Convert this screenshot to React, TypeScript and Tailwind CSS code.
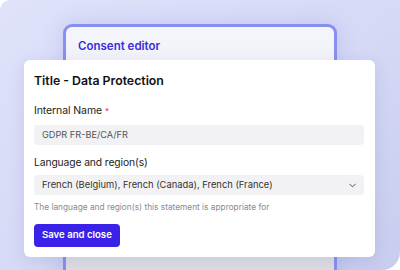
import { ChevronDown } from 'lucide-react'

// Consent editor preview card

export default function App() {
  return (
    <div
      className="relative w-[400px] h-[270px] overflow-hidden rounded-br-[18px] rounded-tl-[10px] bg-gradient-to-br from-[#dfe2fa] via-[#d6daf6] to-[#c8ccee]"
      style={{ fontFamily: 'Inter, "Noto Sans", sans-serif' }}
    >
      {/* Back card */}
      <div className="ml-[63px] mt-[24px] w-[274px] h-[260px] rounded-t-[9px] border-[3px] border-b-0 border-[#8790f0] bg-gradient-to-b from-[#f5f6fc] to-[#dcdce4] px-[12px] pt-[11px] shadow-[0_0_20px_rgba(120,130,220,0.25)]">
        <div className="text-[11.5px] leading-[16px] font-semibold text-[#3a2fd8]">Consent editor</div>
      </div>

      {/* Front card */}
      <div className="absolute left-[24px] top-[60px] w-[351px] h-[197px] rounded-[6px] bg-white px-[10px] pt-[12px] shadow-[0_4px_16px_rgba(60,60,120,0.12)]">
        <h2 className="text-[12.3px] leading-[18px] font-semibold text-[#111]">Title - Data Protection</h2>

        <div className="mt-[13px] text-[10.5px] leading-[16px] tracking-[-0.1px] text-[#222]">
          Internal Name <span className="text-[#e0245e] text-[8px] align-top">*</span>
        </div>
        <div className="mt-[6px] flex h-[20px] w-[330px] items-center rounded-[4px] bg-[#f2f2f4] px-[8px] text-[9.2px] text-[#555]">
          GDPR FR-BE/CA/FR
        </div>

        <div className="mt-[9px] text-[10.3px] leading-[16px] tracking-[-0.1px] text-[#222]">Language and region(s)</div>
        <div className="mt-[5px] flex h-[20px] w-[330px] items-center justify-between rounded-[4px] bg-[#f2f2f4] pl-[8px] pr-[6px] text-[9.4px] text-[#333]">
          <span>French (Belgium), French (Canada), French (France)</span>
          <ChevronDown className="h-[11px] w-[11px] text-[#444]" strokeWidth={2} />
        </div>
        <div className="mt-[6px] text-[8.3px] leading-[12px] text-[#8a8a8f]">
          The language and region(s) this statement is appropriate for
        </div>

        <button className="mt-[11px] h-[23px] rounded-[4px] bg-[#3a22e8] px-[8px] text-[9.6px] font-semibold text-white">
          Save and close
        </button>
      </div>
    </div>
  )
}
